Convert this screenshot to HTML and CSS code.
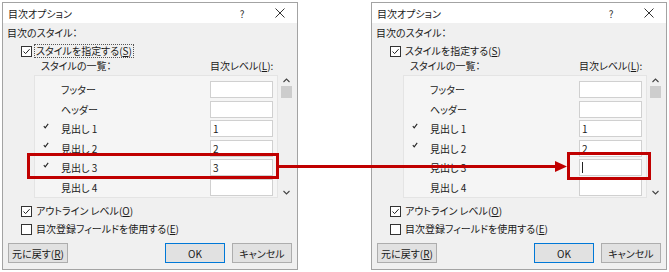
FILE: index.html
```html
<!DOCTYPE html>
<html lang="ja">
<head>
    <meta charset="UTF-8">
    <title>目次オプション</title>
    <link rel="stylesheet" href="styles.css">
</head>
<body>

<div class="page">

    <!-- antes -->
    <div class="dialog">
        <div class="titlebar">
            <span class="title">目次オプション</span>
            <span class="help">?</span>
            <span class="close"><svg width="10" height="10" viewBox="0 0 10 10"><path d="M0.5 0.5 L9.5 9.5 M9.5 0.5 L0.5 9.5" stroke="#333" stroke-width="1" fill="none"/></svg></span>
        </div>
        <div class="body">
            <div class="section">目次のスタイル：</div>
            <div class="check-row first">
                <span class="box"><svg width="9" height="9" viewBox="0 0 9 9"><path d="M1.5 4.5 L3.6 6.6 L7.6 2.2" stroke="#222" stroke-width="1" fill="none"/></svg></span>
                <span class="label focus">スタイルを指定する(<u>S</u>)</span>
            </div>
            <div class="list-head">
                <span class="list-title">スタイルの一覧：</span>
                <span class="level-title">目次レベル(<u>L</u>):</span>
            </div>
            <div class="list-wrap">
                <div class="list">
                    <div class="row"><span class="mark"></span><span class="name">フッター</span><span class="level"></span></div>
                    <div class="row"><span class="mark"></span><span class="name">ヘッダー</span><span class="level"></span></div>
                    <div class="row"><span class="mark"><svg width="6" height="6" viewBox="0 0 6 6"><path d="M0.8 3.2 L2.2 4.8 L5.2 0.8" stroke="#222" stroke-width="1.1" fill="none"/></svg></span><span class="name">見出し 1</span><span class="level">1</span></div>
                    <div class="row"><span class="mark"><svg width="6" height="6" viewBox="0 0 6 6"><path d="M0.8 3.2 L2.2 4.8 L5.2 0.8" stroke="#222" stroke-width="1.1" fill="none"/></svg></span><span class="name">見出し 2</span><span class="level">2</span></div>
                    <div class="row"><span class="mark"><svg width="6" height="6" viewBox="0 0 6 6"><path d="M0.8 3.2 L2.2 4.8 L5.2 0.8" stroke="#222" stroke-width="1.1" fill="none"/></svg></span><span class="name">見出し 3</span><span class="level">3</span></div>
                    <div class="row"><span class="mark"></span><span class="name">見出し 4</span><span class="level"></span></div>
                </div>
                <div class="scroll">
                    <svg width="7" height="5" viewBox="0 0 7 5"><path d="M0.5 4 L3.5 1 L6.5 4" stroke="#444" stroke-width="1.1" fill="none"/></svg>
                    <div class="thumb"></div>
                    <div class="spacer"></div>
                    <svg width="7" height="5" viewBox="0 0 7 5"><path d="M0.5 1 L3.5 4 L6.5 1" stroke="#444" stroke-width="1.1" fill="none"/></svg>
                </div>
            </div>
            <div class="check-row outline">
                <span class="box"><svg width="9" height="9" viewBox="0 0 9 9"><path d="M1.5 4.5 L3.6 6.6 L7.6 2.2" stroke="#222" stroke-width="1" fill="none"/></svg></span>
                <span class="label">アウトライン レベル(<u>O</u>)</span>
            </div>
            <div class="check-row">
                <span class="box"></span>
                <span class="label">目次登録フィールドを使用する(<u>E</u>)</span>
            </div>
            <div class="buttons">
                <button class="btn">元に戻す(<u>R</u>)</button>
                <span class="grow"></span>
                <button class="btn ok">OK</button>
                <button class="btn cancel">キャンセル</button>
            </div>
        </div>
    </div>

    <!-- después -->
    <div class="dialog">
        <div class="titlebar">
            <span class="title">目次オプション</span>
            <span class="help">?</span>
            <span class="close"><svg width="10" height="10" viewBox="0 0 10 10"><path d="M0.5 0.5 L9.5 9.5 M9.5 0.5 L0.5 9.5" stroke="#333" stroke-width="1" fill="none"/></svg></span>
        </div>
        <div class="body">
            <div class="section">目次のスタイル：</div>
            <div class="check-row first">
                <span class="box"><svg width="9" height="9" viewBox="0 0 9 9"><path d="M1.5 4.5 L3.6 6.6 L7.6 2.2" stroke="#222" stroke-width="1" fill="none"/></svg></span>
                <span class="label">スタイルを指定する(<u>S</u>)</span>
            </div>
            <div class="list-head">
                <span class="list-title">スタイルの一覧：</span>
                <span class="level-title">目次レベル(<u>L</u>):</span>
            </div>
            <div class="list-wrap">
                <div class="list">
                    <div class="row"><span class="mark"></span><span class="name">フッター</span><span class="level"></span></div>
                    <div class="row"><span class="mark"></span><span class="name">ヘッダー</span><span class="level"></span></div>
                    <div class="row"><span class="mark"><svg width="6" height="6" viewBox="0 0 6 6"><path d="M0.8 3.2 L2.2 4.8 L5.2 0.8" stroke="#222" stroke-width="1.1" fill="none"/></svg></span><span class="name">見出し 1</span><span class="level">1</span></div>
                    <div class="row"><span class="mark"><svg width="6" height="6" viewBox="0 0 6 6"><path d="M0.8 3.2 L2.2 4.8 L5.2 0.8" stroke="#222" stroke-width="1.1" fill="none"/></svg></span><span class="name">見出し 2</span><span class="level">2</span></div>
                    <div class="row"><span class="mark"></span><span class="name">見出し 3</span><span class="level editing"><span class="caret"></span></span></div>
                    <div class="row"><span class="mark"></span><span class="name">見出し 4</span><span class="level"></span></div>
                </div>
                <div class="scroll">
                    <svg width="7" height="5" viewBox="0 0 7 5"><path d="M0.5 4 L3.5 1 L6.5 4" stroke="#444" stroke-width="1.1" fill="none"/></svg>
                    <div class="thumb"></div>
                    <div class="spacer"></div>
                    <svg width="7" height="5" viewBox="0 0 7 5"><path d="M0.5 1 L3.5 4 L6.5 1" stroke="#444" stroke-width="1.1" fill="none"/></svg>
                </div>
            </div>
            <div class="check-row outline">
                <span class="box"><svg width="9" height="9" viewBox="0 0 9 9"><path d="M1.5 4.5 L3.6 6.6 L7.6 2.2" stroke="#222" stroke-width="1" fill="none"/></svg></span>
                <span class="label">アウトライン レベル(<u>O</u>)</span>
            </div>
            <div class="check-row">
                <span class="box"></span>
                <span class="label">目次登録フィールドを使用する(<u>E</u>)</span>
            </div>
            <div class="buttons">
                <button class="btn">元に戻す(<u>R</u>)</button>
                <span class="grow"></span>
                <button class="btn ok">OK</button>
                <button class="btn cancel">キャンセル</button>
            </div>
        </div>
    </div>

    <!-- marcas rojas encima de todo -->
    <svg class="overlay" width="669" height="272" viewBox="0 0 669 272">
        <rect x="28.5" y="154.5" width="249" height="23" fill="none" stroke="#c00000" stroke-width="3"/>
        <rect x="568.5" y="153.5" width="81" height="25" fill="none" stroke="#c00000" stroke-width="3"/>
        <path d="M279 166.5 L557 166.5" stroke="#c00000" stroke-width="3" fill="none"/>
        <path d="M555 161 L567 166.5 L555 172 Z" fill="#c00000"/>
    </svg>

</div>

</body>
</html>
```

FILE: styles.css
```css
body {
    margin: 0;
    background: #fff;
    font-family: "Noto Sans CJK JP", "Noto Sans", sans-serif;
    font-size: 10px;
    font-feature-settings: "palt";
    color: #1a1a1a;
}
.page {
    position: relative;
    display: flex;
    gap: 73px;
    width: 669px;
    height: 272px;
    padding: 2px 0 0 2px;
    box-sizing: border-box;
}
.dialog {
    width: 296px;
    height: 268px;
    border: 1px solid #a3a3a3;
    box-sizing: border-box;
    background: #f0f0f0;
    display: flex;
    flex-direction: column;
}
.titlebar {
    height: 20px;
    background: #fff;
    display: flex;
    align-items: center;
    padding-left: 5px;
    flex-shrink: 0;
}
.title {
    flex: 1;
}
.help {
    width: 10px;
    text-align: center;
    color: #333;
    margin-right: 28px;
}
.close {
    width: 10px;
    height: 10px;
    display: flex;
    margin-right: 12px;
}
.body {
    padding: 3px 4px 0 4px;
    display: flex;
    flex-direction: column;
}
.section {
    height: 14px;
    line-height: 14px;
}
.check-row {
    height: 14px;
    display: flex;
    align-items: center;
    padding-left: 14px;
    margin-top: 4px;
}
.check-row.outline {
    margin-top: 6px;
}
.box {
    width: 11px;
    height: 11px;
    border: 1px solid #333;
    box-sizing: border-box;
    background: #fff;
    display: flex;
    align-items: center;
    justify-content: center;
    margin-right: 2px;
}
.label {
    padding: 0 1px;
    line-height: 12px;
    border: 1px solid transparent;
}
.label.focus {
    border: 1px dotted #555;
}
.list-head {
    height: 14px;
    line-height: 14px;
    display: flex;
    margin-top: 1px;
    padding-left: 34px;
}
.list-title {
    width: 169px;
}
.list-wrap {
    display: flex;
    margin-top: 2px;
    padding-left: 27px;
    height: 123px;
}
.list {
    width: 244px;
    height: 123px;
    box-sizing: border-box;
    border: 1px solid #e4e4e4;
    background: #f5f5f5;
    padding-top: 4px;
}
.row {
    height: 19.5px;
    display: flex;
    align-items: center;
}
.mark {
    width: 6px;
    height: 6px;
    margin-left: 8px;
    margin-right: 12px;
    display: flex;
    position: relative;
    top: -3px;
}
.name {
    width: 149px;
    color: #222;
}
.level {
    width: 63px;
    height: 17px;
    box-sizing: border-box;
    border: 1px solid #d0d0d0;
    background: #fff;
    padding-left: 2px;
    line-height: 15px;
    display: flex;
    align-items: center;
}
.caret {
    width: 1px;
    height: 11px;
    background: #222;
}
.scroll {
    width: 14px;
    margin-left: 1px;
    display: flex;
    flex-direction: column;
    align-items: center;
    padding-top: 3px;
    padding-bottom: 3px;
    box-sizing: border-box;
}
.thumb {
    width: 11px;
    height: 12px;
    background: #cdcdcd;
    margin-top: 3px;
}
.spacer {
    flex: 1;
}
.buttons {
    display: flex;
    margin-top: 7px;
    padding-left: 1px;
}
.grow {
    flex: 1;
}
.btn {
    width: 60px;
    height: 20px;
    font-family: inherit;
    font-size: 10px;
    font-feature-settings: "palt";
    color: #1a1a1a;
    background: #e1e1e1;
    border: 1px solid #adadad;
    padding: 0;
}
.btn.ok {
    border-color: #0078d7;
}
.btn.cancel {
    margin-left: 7px;
    margin-right: 1px;
}
u {
    text-decoration-thickness: 1px;
    text-underline-offset: 1px;
}
.overlay {
    position: absolute;
    left: 0;
    top: 0;
    pointer-events: none;
}
```
